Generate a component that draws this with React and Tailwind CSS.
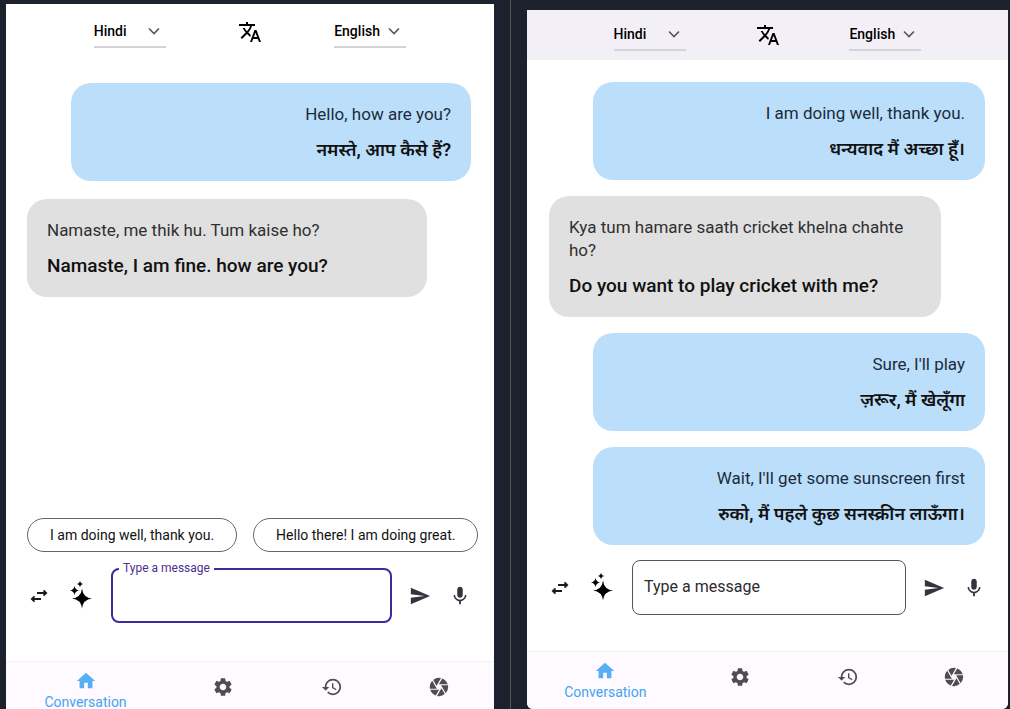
import React from "react";
import { MdTranslate, MdSend, MdMic, MdHome, MdSettings, MdHistory, MdCamera } from "react-icons/md";

function SwapIcon() {
  return (
    <svg width="20" height="20" viewBox="0 0 20 20" fill="none" stroke="#1d1b20" strokeWidth="1.8">
      <path d="M8 7h9M14.500 4.300L17.200 7l-2.700 2.700M12 13H3M5.500 10.300L2.800 13l2.700 2.700" />
    </svg>
  );
}

function SparkleIcon() {
  return (
    <svg width="24" height="30" viewBox="0 0 24 30" fill="#000">
      <path d="M13 7.500Q14 16.500 23 17.500Q14 18.500 13 27.500Q12 18.500 3 17.500Q12 16.500 13 7.500Z" />
      <path d="M5.500 5Q6.200 8.800 10 9.500Q6.200 10.200 5.500 14Q4.800 10.200 1 9.500Q4.800 8.800 5.500 5Z" />
      <path d="M11 0Q11.500 2.500 14 3Q11.500 3.500 11 6Q10.500 3.500 8 3Q10.500 2.500 11 0Z" />
    </svg>
  );
}

function ChevronIcon() {
  return (
    <svg
      className="pointer-events-none absolute right-1.5"
      width="12"
      height="8"
      viewBox="0 0 12 8"
      fill="none"
      stroke="#555"
      strokeWidth="1.6"
    >
      <path d="M1 1.500l5 5 5-5" />
    </svg>
  );
}

function LanguageSelect({ label, value }) {
  return (
    <label className="relative flex h-8 w-[72px] items-center border-b-2 border-[#d5d3d8]">
      <select
        aria-label={label}
        defaultValue={value}
        className="w-full appearance-none bg-transparent text-sm font-medium text-black outline-none"
      >
        <option>Hindi</option>
        <option>English</option>
      </select>
      <ChevronIcon />
    </label>
  );
}

function Header({ className }) {
  return (
    <header className={`flex shrink-0 items-center justify-between px-[18%] ${className}`}>
      <LanguageSelect label="Source language" value="Hindi" />
      <MdTranslate className="size-6 text-black" />
      <LanguageSelect label="Target language" value="English" />
    </header>
  );
}

function Bubble({ mine, original, translated }) {
  return (
    <li
      className={`w-9/10 rounded-[20px] px-5 pt-5 pb-[17px] ${
        mine ? "self-end bg-[#bbdefb] text-right text-[#1b2c3a]" : "self-start bg-[#e0e0e0] text-left text-[#303030]"
      }`}
    >
      <p className="text-[17px] leading-[23px]">{original}</p>
      <p
        lang={mine ? "hi" : "en"}
        className={`mt-2.5 leading-7 text-[#111] ${mine ? "text-lg font-semibold" : "text-[19px] font-medium"}`}
      >
        {translated}
      </p>
    </li>
  );
}

function Composer({ id, focused }) {
  return (
    <form className="flex items-center" onSubmit={(e) => e.preventDefault()}>
      <button type="button" aria-label="Swap languages" className="flex w-6 justify-center">
        <SwapIcon />
      </button>
      <button type="button" aria-label="Suggest replies" className="ml-[18px] flex w-6 justify-center">
        <SparkleIcon />
      </button>
      <div className="relative ml-[18px] min-w-0 flex-1">
        <label
          htmlFor={id}
          className={
            focused
              ? "absolute -top-2 left-2 bg-white px-1 text-xs leading-4 text-[#4a2f96]"
              : "absolute top-[17px] left-3 text-base leading-5 text-[#2e2b33]"
          }
        >
          Type a message
        </label>
        <input
          id={id}
          type="text"
          className={`block h-[55px] w-full rounded-lg bg-transparent px-3 text-base outline-none ${
            focused ? "border-2 border-[#43289b]" : "border border-[#555]"
          }`}
        />
      </div>
      <button type="submit" aria-label="Send" className="ml-4 flex w-6 justify-center">
        <MdSend className="size-[22px] text-[#37333d]" />
      </button>
      <button type="button" aria-label="Record voice" className="ml-4 flex w-6 justify-center">
        <MdMic className="size-[22px] text-[#37333d]" />
      </button>
    </form>
  );
}

function BottomNav({ className }) {
  const icon = "size-[22px] text-[#4e4e4e]";
  return (
    <nav
      className={`grid shrink-0 grid-cols-[159fr_115fr_104fr_110fr] border-t border-[#f3f1f5] bg-[#fefaff] ${className}`}
    >
      <a href="#conversation" className="flex flex-col items-center gap-1 pt-2 text-sm leading-3 text-[#45a4ee]">
        <MdHome className="size-[22px] text-[#56aef5]" />
        Conversation
      </a>
      <a href="#settings" aria-label="Settings" className="flex justify-center pt-3.5">
        <MdSettings className={icon} />
      </a>
      <a href="#history" aria-label="History" className="flex justify-center pt-3.5">
        <MdHistory className={icon} />
      </a>
      <a href="#camera" aria-label="Camera" className="flex justify-center pt-3.5">
        <MdCamera className={icon} />
      </a>
    </nav>
  );
}

function Chip({ children }) {
  return (
    <button
      type="button"
      className="h-[34px] shrink-0 rounded-full border border-[#666] px-[22px] text-sm whitespace-nowrap text-[#111]"
    >
      {children}
    </button>
  );
}

export default function App() {
  return (
    <div className="grid min-h-screen grid-cols-[511fr_499fr] bg-[#1b222e] font-[Roboto,'Noto_Sans',sans-serif]">
      <div className="flex min-w-0 border-r border-[#57544a] pt-1 pr-4 pl-1.5">
        <section className="flex min-w-0 flex-1 flex-col bg-white">
          <Header className="h-[55px]" />
          <ul className="flex flex-1 flex-col gap-[18px] pt-6 pr-[23px] pl-[21px]">
            <Bubble mine original="Hello, how are you?" translated="नमस्ते, आप कैसे हैं?" />
            <Bubble original="Namaste, me thik hu. Tum kaise ho?" translated="Namaste, I am fine. how are you?" />
          </ul>
          <div className="mr-3.5 ml-[21px] flex gap-4 overflow-hidden">
            <Chip>I am doing well, thank you.</Chip>
            <Chip>Hello there! I am doing great.</Chip>
          </div>
          <div className="pt-4 pr-[22px] pb-[38px] pl-[21px]">
            <Composer id="message-left" focused />
          </div>
          <BottomNav className="pb-px" />
        </section>
      </div>
      <div className="flex min-w-0 pt-2.5 pr-0.5 pl-4">
        <section className="flex min-w-0 flex-1 flex-col overflow-hidden rounded-b-md bg-white">
          <Header className="h-[50px] bg-[#f3eff7]" />
          <ul className="flex flex-1 flex-col gap-4 pt-[22px] pr-[23px] pl-[22px]">
            <Bubble mine original="I am doing well, thank you." translated="धन्यवाद मैं अच्छा हूँ।" />
            <Bubble
              original="Kya tum hamare saath cricket khelna chahte ho?"
              translated="Do you want to play cricket with me?"
            />
            <Bubble mine original="Sure, I'll play" translated="ज़रूर, मैं खेलूँगा" />
            <Bubble mine original="Wait, I'll get some sunscreen first" translated="रुको, मैं पहले कुछ सनस्क्रीन लाऊँगा।" />
          </ul>
          <div className="pt-[15px] pr-[22px] pb-9 pl-[21px]">
            <Composer id="message-right" />
          </div>
          <BottomNav className="pb-[11px]" />
        </section>
      </div>
    </div>
  );
}
